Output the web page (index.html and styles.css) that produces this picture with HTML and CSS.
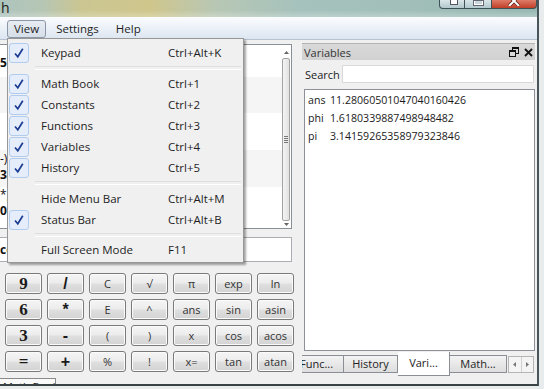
FILE: index.html
```html
<!DOCTYPE html>
<html>
<head>
<meta charset="utf-8">
<link rel="stylesheet" href="styles.css">
</head>
<body>
<div class="window">
  <div class="titlebar">
    <span class="title">h</span>
    <div class="winbtns">
      <span class="wb wb-min"><i class="ico-min"></i></span>
      <span class="wb wb-max"><i class="ico-max"></i></span>
      <span class="wb wb-close"><svg width="14" height="6" viewBox="0 0 14 6"><path d="M1 -5 L12 6 M13 -5 L2 6" stroke="#5a2018" stroke-width="3.4"/><path d="M1 -5 L12 6 M13 -5 L2 6" stroke="#fff" stroke-width="2"/></svg></span>
    </div>
  </div>
  <div class="menubar">
    <span class="mi active">View</span>
    <span class="mi">Settings</span>
    <span class="mi">Help</span>
  </div>
  <div class="main">
    <div class="leftcol">
      <div class="display">
        <div class="results">
          <div class="entry e1"><div class="ln b">56</div></div>
          <div class="entry e2 alt"></div>
          <div class="entry e3"></div>
          <div class="entry e4 alt"><div class="ln">-)</div><div class="ln b">34</div></div>
          <div class="entry e5"><div class="ln">*,</div><div class="ln b">0:</div></div>
        </div>
        <div class="vscroll">
          <div class="sarrow"><svg width="5" height="3" viewBox="0 0 5 3"><path d="M0 3 L2.5 0 L5 3Z" fill="#666"/></svg></div>
          <div class="thumb"><span class="grip"></span></div>
          <div class="sarrow"><svg width="5" height="3" viewBox="0 0 5 3"><path d="M0 0 L2.5 3 L5 0Z" fill="#666"/></svg></div>
        </div>
      </div>
      <div class="input">cos</div>
      <div class="keypad">
        <span class="key num">9</span><span class="key op">/</span><span class="key">C</span><span class="key">√</span><span class="key">π</span><span class="key">exp</span><span class="key">ln</span>
        <span class="key num">6</span><span class="key op">*</span><span class="key">E</span><span class="key">^</span><span class="key">ans</span><span class="key">sin</span><span class="key">asin</span>
        <span class="key num">3</span><span class="key op">-</span><span class="key">(</span><span class="key">)</span><span class="key">x</span><span class="key">cos</span><span class="key">acos</span>
        <span class="key num">=</span><span class="key op">+</span><span class="key">%</span><span class="key">!</span><span class="key">x=</span><span class="key">tan</span><span class="key">atan</span>
      </div>
      <div class="statusbar"><span class="stab">Math Book</span></div>
    </div>
    <div class="dock">
      <div class="dtitle">
        <span>Variables</span>
        <span class="dicons">
          <svg width="10" height="10" viewBox="0 0 10 10"><rect x="3.5" y="0.5" width="6" height="6" fill="none" stroke="#111"/><rect x="3" y="0" width="7" height="2" fill="#111"/><rect x="0.5" y="3.5" width="6" height="6" fill="#dadada" stroke="#111"/><rect x="0" y="3" width="7" height="2" fill="#111"/></svg>
          <svg width="9" height="9" viewBox="0 0 9 9"><path d="M1 1 L8 8 M8 1 L1 8" stroke="#111" stroke-width="1.8"/></svg>
        </span>
      </div>
      <div class="search"><span class="slabel">Search</span><span class="sinput"></span></div>
      <div class="vlist">
        <div class="vrow"><span class="vname">ans</span><span>11.28060501047040160426</span></div>
        <div class="vrow"><span class="vname">phi</span><span>1.6180339887498948482</span></div>
        <div class="vrow"><span class="vname">pi</span><span>3.14159265358979323846</span></div>
      </div>
      <div class="tabs">
        <span class="tab t-func">Func...</span>
        <span class="tab t-hist">History</span>
        <span class="tab t-vari active">Vari...</span>
        <span class="tab t-math">Math...</span>
        <span class="tarrows">
          <span class="ta"><svg width="3" height="5" viewBox="0 0 3 5"><path d="M3 0 L0 2.5 L3 5Z" fill="#777"/></svg></span>
          <span class="ta"><svg width="3" height="5" viewBox="0 0 3 5"><path d="M0 0 L3 2.5 L0 5Z" fill="#777"/></svg></span>
        </span>
      </div>
    </div>
  </div>
  <div class="dropdown">
    <div class="item"><span class="chk"><svg width="20" height="20" viewBox="0 0 20 20"><path d="M6 10.5 L8.8 13.8 L13.8 5.8" fill="none" stroke="#1c3c93" stroke-width="1.7"/></svg></span><span class="lbl">Keypad</span><span class="sc">Ctrl+Alt+K</span></div>
    <div class="sep"></div>
    <div class="item"><span class="chk"><svg width="20" height="20" viewBox="0 0 20 20"><path d="M6 10.5 L8.8 13.8 L13.8 5.8" fill="none" stroke="#1c3c93" stroke-width="1.7"/></svg></span><span class="lbl">Math Book</span><span class="sc">Ctrl+1</span></div>
    <div class="item"><span class="chk"><svg width="20" height="20" viewBox="0 0 20 20"><path d="M6 10.5 L8.8 13.8 L13.8 5.8" fill="none" stroke="#1c3c93" stroke-width="1.7"/></svg></span><span class="lbl">Constants</span><span class="sc">Ctrl+2</span></div>
    <div class="item"><span class="chk"><svg width="20" height="20" viewBox="0 0 20 20"><path d="M6 10.5 L8.8 13.8 L13.8 5.8" fill="none" stroke="#1c3c93" stroke-width="1.7"/></svg></span><span class="lbl">Functions</span><span class="sc">Ctrl+3</span></div>
    <div class="item"><span class="chk"><svg width="20" height="20" viewBox="0 0 20 20"><path d="M6 10.5 L8.8 13.8 L13.8 5.8" fill="none" stroke="#1c3c93" stroke-width="1.7"/></svg></span><span class="lbl">Variables</span><span class="sc">Ctrl+4</span></div>
    <div class="item"><span class="chk"><svg width="20" height="20" viewBox="0 0 20 20"><path d="M6 10.5 L8.8 13.8 L13.8 5.8" fill="none" stroke="#1c3c93" stroke-width="1.7"/></svg></span><span class="lbl">History</span><span class="sc">Ctrl+5</span></div>
    <div class="sep"></div>
    <div class="item"><span class="nochk"></span><span class="lbl">Hide Menu Bar</span><span class="sc">Ctrl+Alt+M</span></div>
    <div class="item"><span class="chk"><svg width="20" height="20" viewBox="0 0 20 20"><path d="M6 10.5 L8.8 13.8 L13.8 5.8" fill="none" stroke="#1c3c93" stroke-width="1.7"/></svg></span><span class="lbl">Status Bar</span><span class="sc">Ctrl+Alt+B</span></div>
    <div class="sep s9"></div>
    <div class="item"><span class="nochk"></span><span class="lbl">Full Screen Mode</span><span class="sc">F11</span></div>
  </div>
</div>
</body>
</html>
```

FILE: styles.css
```css
* { box-sizing: border-box; }
body {
  margin: 0;
  width: 544px;
  height: 389px;
  overflow: hidden;
  background: #e9ecec;
  font-family: "Open Sans", "Noto Sans", sans-serif;
  font-size: 11px;
  color: #1e1e1e;
}
.window {
  position: relative;
  width: 539px;
  height: 386px;
  border-right: 2px solid #48565b;
  border-bottom: 2px solid #394245;
  background: #f0f0f0;
  display: flex;
  flex-direction: column;
  overflow: hidden;
}
.titlebar {
  height: 17px;
  flex: none;
  display: flex;
  justify-content: space-between;
  align-items: flex-start;
  background:
    linear-gradient(rgba(255,255,255,0) 60%, rgba(255,255,255,0.25)),
    linear-gradient(90deg, #adc4be 0%, #b6c6b4 8%, #cbc692 15%, #cfc68c 28%, #b8c7b4 40%, #a6c2bc 55%, #a2bfb9 75%, #97b8b2 100%);
}
.title { font-size: 14px; line-height: 16px; color: #1a1a1a; padding-left: 1px; }
.winbtns { display: flex; }
.wb {
  height: 9px;
  border: 1px solid #3e5156;
  border-top: none;
  display: flex;
  justify-content: center;
  align-items: flex-start;
  background: linear-gradient(#d9e6e8, #b2c8cc);
}
.wb-min { width: 26px; border-radius: 0 0 0 4px; }
.wb-max { width: 27px; border-left: none; }
.wb-close { width: 45px; border-left: none; border-radius: 0 0 4px 0; background: linear-gradient(#de7c68, #c13e27); }
.ico-min { display: block; width: 8px; height: 5px; background: #fff; border: 1px solid #556; border-top: none; margin-left: 4px; }
.ico-max { display: block; width: 11px; height: 6px; border: 2px solid #fff; border-top: none; outline: 1px solid #667; outline-offset: -1px; background: #c9d8db; }

.menubar {
  height: 23px;
  flex: none;
  display: flex;
  align-items: flex-start;
  padding: 3px 0 0 7px;
  gap: 3px;
  background: linear-gradient(#fbfcfe, #eaf0f7 55%, #dce5f1);
  border-bottom: 1px solid #b8c2cf;
  font-size: 11.5px;
}
.mi {
  height: 18px;
  line-height: 16px;
  padding: 0 6px;
  border: 1px solid transparent;
  border-radius: 3px;
}
.mi.active { border-color: #8b97a7; background: linear-gradient(#e8edf3, #d6dee8); }

.main { flex: 1; display: flex; padding-top: 3px; min-height: 0; }
.leftcol { width: 292px; flex: none; display: flex; flex-direction: column; }
.display {
  margin-top: 1px;
  height: 185px;
  flex: none;
  border: 1px solid #8b9098;
  border-left: none;
  background: #fff;
  display: flex;
}
.results { flex: 1; display: flex; flex-direction: column; overflow: hidden; }
.entry { flex: none; }
.entry.alt { background: #f5f5f5; }
.e1 { height: 32px; padding-top: 10px; }
.e2 { height: 36px; }
.e3 { height: 37px; }
.e4 { height: 37px; padding-top: 1px; }
.e5 { flex: 1; }
.ln { height: 16px; line-height: 16px; font-size: 12px; color: #111; }
.ln.b { font-weight: bold; }

.vscroll { width: 8px; margin: 1px 1px 1px 0; display: flex; flex-direction: column; align-items: center; }
.sarrow { height: 12px; display: flex; align-items: center; justify-content: center; }
.vscroll .sarrow:last-child { height: 6px; }
.thumb {
  flex: 1;
  width: 8px;
  border: 1px solid #a3a3a3;
  border-radius: 2px;
  background: linear-gradient(90deg, #f4f4f4, #e2e2e2);
  display: flex;
  align-items: center;
  justify-content: center;
}
.grip { width: 4px; height: 7px; background: repeating-linear-gradient(#777 0 1px, transparent 1px 2px); }

.input {
  margin-top: 8px;
  height: 25px;
  flex: none;
  border: 1px solid #abadb3;
  border-left: none;
  background: #fff;
  font-weight: bold;
  font-size: 12px;
  line-height: 23px;
  color: #111;
}
.keypad {
  margin-top: 11px;
  padding-left: 5px;
  display: grid;
  grid-template-columns: repeat(7, 37px);
  grid-auto-rows: 21px;
  column-gap: 5px;
  row-gap: 5px;
}
.key {
  border: 1px solid #7a7a7a;
  border-radius: 3px;
  background: linear-gradient(#f5f5f5, #ececec 48%, #dfdfdf 52%, #d3d3d3);
  box-shadow: inset 0 0 0 1px #fbfbfb;
  display: flex;
  align-items: center;
  justify-content: center;
  color: #333;
  font-size: 11px;
}
.key.num { font-family: "Liberation Serif", serif; font-weight: bold; font-size: 17px; color: #1a1a1a; }
.key.op { font-family: "Liberation Sans", sans-serif; font-weight: bold; font-size: 16px; color: #1a1a1a; }
.statusbar { margin-top: 6px; height: 6px; overflow: hidden; flex: none; }
.stab {
  display: block;
  width: 56px;
  height: 8px;
  border: 1px solid #8a8a8a;
  border-left: none;
  background: #fafafa;
  font-size: 11px;
  line-height: 16px;
  padding-left: 3px;
  white-space: nowrap;
  overflow: hidden;
}

.dock { width: 237px; margin-left: 8px; padding: 0 2px; display: flex; flex-direction: column; flex: none; }
.dtitle {
  height: 17px;
  flex: none;
  border-top: 1px solid #b3b3b3;
  background: linear-gradient(#d9d9d9, #d1d1d1);
  display: flex;
  align-items: center;
  justify-content: space-between;
  padding: 0 2px 0 2px;
  color: #333;
}
.dicons { display: flex; align-items: center; gap: 5px; }
.search { margin-top: 5px; height: 18px; flex: none; display: flex; align-items: center; }
.slabel { width: 40px; padding-left: 3px; color: #222; }
.sinput { flex: 1; height: 18px; margin-right: 1px; border: 1px solid #d9d9d9; background: #fff; }
.vlist {
  margin: 6px 0 0 2px;
  height: 262px;
  flex: none;
  border: 1px solid #8d9099;
  background: #fff;
  padding: 1px 0 0 3px;
  color: #1a1a1a;
  font-size: 10.6px;
}
.vrow { display: flex; height: 18px; line-height: 18px; white-space: nowrap; }
.vname { width: 22px; flex: none; }
.tabs { margin-top: 1px; height: 24px; flex: none; display: flex; align-items: flex-start; overflow: hidden; }
.tab {
  flex: none;
  margin-top: 3px;
  height: 18px;
  line-height: 16px;
  border: 1px solid #8b8e94;
  background: linear-gradient(#f3f3f3, #dddddd);
  text-align: center;
  color: #222;
  white-space: nowrap;
}
.t-func { width: 51px; margin-left: -9px; text-align: left; padding-left: 6px; }
.t-hist { width: 54px; border-left: none; }
.t-vari { width: 52px; }
.t-math { width: 57px; border-left: none; }
.tab.active { margin-top: 0; height: 24px; border-top: none; border-left: none; background: #fff; line-height: 22px; }
.tarrows {
  flex: none;
  margin: 4px 0 0 1px;
  width: 26px;
  height: 17px;
  border: 1px solid #b5b5b5;
  background: #f4f4f4;
  display: flex;
}
.ta { flex: 1; display: flex; align-items: center; justify-content: center; }
.ta + .ta { border-left: 1px solid #d0d0d0; }

.dropdown {
  position: absolute;
  left: 7px;
  top: 38px;
  width: 237px;
  border: 1px solid #979797;
  background: #f0f0f0;
  box-shadow: 2px 2px 2px rgba(0, 0, 0, 0.35);
  padding: 3px 0 2px 1px;
  color: #1e1e1e;
  font-size: 11.5px;
}
.item { height: 21px; display: flex; align-items: center; white-space: nowrap; }
.chk {
  width: 20px;
  height: 20px;
  flex: none;
  border: 1px solid #b0ccef;
  border-radius: 3px;
  background: #e4edf9;
  display: flex;
}
.chk svg { margin: -1px; }
.nochk { width: 20px; height: 20px; flex: none; }
.lbl { margin-left: 12px; width: 127px; flex: none; }
.sep { height: 10px; display: flex; align-items: center; padding: 0 2px 0 26px; }
.sep.s9 { height: 9px; }
.sep::after { content: ""; flex: 1; height: 2px; border-top: 1px solid #dedede; border-bottom: 1px solid #ffffff; }
```
